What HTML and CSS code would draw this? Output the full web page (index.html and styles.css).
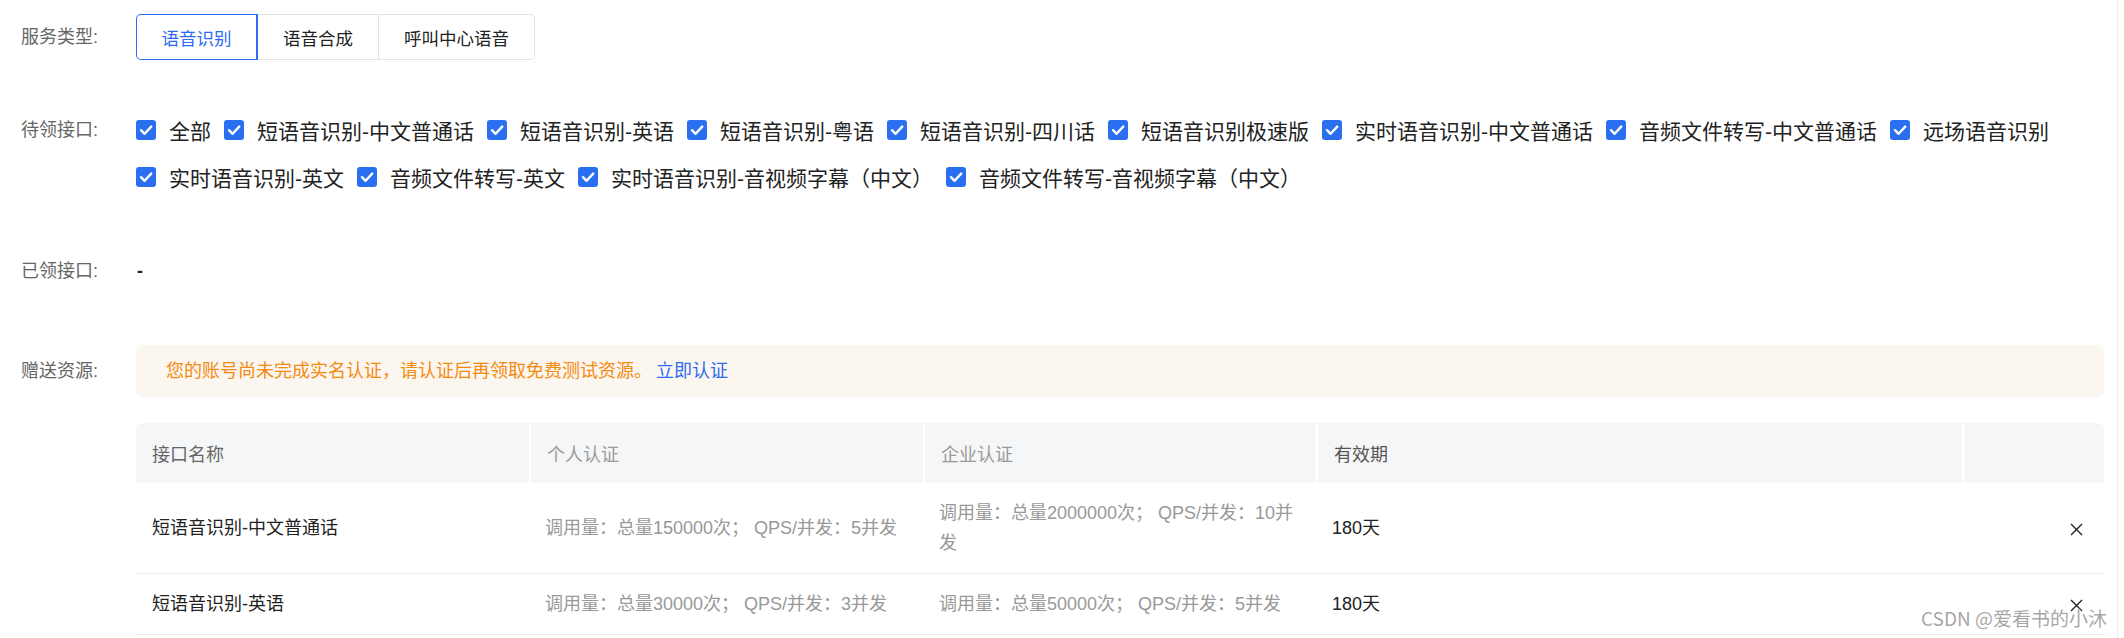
FILE: index.html
```html
<!DOCTYPE html>
<html lang="zh-CN">
<head>
<meta charset="UTF-8" />
<meta name="viewport" content="width=device-width, initial-scale=1" />
<title>免费资源领取</title>
<link rel="stylesheet" href="styles.css">
</head>
<body>

<div class="page">

  <div class="form-row row-service">
    <div class="form-label">服务类型:</div>
    <div class="form-ctrl">
      <div class="seg">
        <button class="seg-item active">语音识别</button>
        <button class="seg-item">语音合成</button>
        <button class="seg-item">呼叫中心语音</button>
      </div>
    </div>
  </div>

  <div class="form-row row-apis">
    <div class="form-label">待领接口:</div>
    <div class="form-ctrl">
      <div class="check-group">
        <label class="check"><span class="box"><svg viewBox="0 0 20 20"><path d="M5 10.2 L8.6 13.8 L15.2 6.6" /></svg></span>全部</label>
        <label class="check"><span class="box"><svg viewBox="0 0 20 20"><path d="M5 10.2 L8.6 13.8 L15.2 6.6" /></svg></span>短语音识别-中文普通话</label>
        <label class="check"><span class="box"><svg viewBox="0 0 20 20"><path d="M5 10.2 L8.6 13.8 L15.2 6.6" /></svg></span>短语音识别-英语</label>
        <label class="check"><span class="box"><svg viewBox="0 0 20 20"><path d="M5 10.2 L8.6 13.8 L15.2 6.6" /></svg></span>短语音识别-粤语</label>
        <label class="check"><span class="box"><svg viewBox="0 0 20 20"><path d="M5 10.2 L8.6 13.8 L15.2 6.6" /></svg></span>短语音识别-四川话</label>
        <label class="check"><span class="box"><svg viewBox="0 0 20 20"><path d="M5 10.2 L8.6 13.8 L15.2 6.6" /></svg></span>短语音识别极速版</label>
        <label class="check"><span class="box"><svg viewBox="0 0 20 20"><path d="M5 10.2 L8.6 13.8 L15.2 6.6" /></svg></span>实时语音识别-中文普通话</label>
        <label class="check"><span class="box"><svg viewBox="0 0 20 20"><path d="M5 10.2 L8.6 13.8 L15.2 6.6" /></svg></span>音频文件转写-中文普通话</label>
        <label class="check"><span class="box"><svg viewBox="0 0 20 20"><path d="M5 10.2 L8.6 13.8 L15.2 6.6" /></svg></span>远场语音识别</label>
        <label class="check"><span class="box"><svg viewBox="0 0 20 20"><path d="M5 10.2 L8.6 13.8 L15.2 6.6" /></svg></span>实时语音识别-英文</label>
        <label class="check"><span class="box"><svg viewBox="0 0 20 20"><path d="M5 10.2 L8.6 13.8 L15.2 6.6" /></svg></span>音频文件转写-英文</label>
        <label class="check"><span class="box"><svg viewBox="0 0 20 20"><path d="M5 10.2 L8.6 13.8 L15.2 6.6" /></svg></span>实时语音识别-音视频字幕（中文）</label>
        <label class="check"><span class="box"><svg viewBox="0 0 20 20"><path d="M5 10.2 L8.6 13.8 L15.2 6.6" /></svg></span>音频文件转写-音视频字幕（中文）</label>
      </div>
    </div>
  </div>

  <div class="form-row row-owned">
    <div class="form-label">已领接口:</div>
    <div class="form-ctrl"><span class="empty">-</span></div>
  </div>

  <div class="form-row row-gift">
    <div class="form-label">赠送资源:</div>
    <div class="form-ctrl">
      <div class="alert">
        您的账号尚未完成实名认证，请认证后再领取免费测试资源。<a href="#" class="alert-link">立即认证</a>
      </div>
    </div>
  </div>

  <div class="table-wrap">
    <table class="quota">
      <colgroup>
        <col class="c-name"><col class="c-personal"><col class="c-company"><col class="c-period"><col class="c-op">
      </colgroup>
      <thead>
        <tr>
          <th class="th-name">接口名称</th>
          <th class="th-muted">个人认证</th>
          <th class="th-muted">企业认证</th>
          <th class="th-period">有效期</th>
          <th></th>
        </tr>
      </thead>
      <tbody>
        <tr>
          <td>短语音识别-中文普通话</td>
          <td class="muted">调用量：总量150000次； QPS/并发：5并发</td>
          <td class="muted">调用量：总量2000000次； QPS/并发：10并发</td>
          <td>180天</td>
          <td class="op"><svg class="x" viewBox="0 0 13 13"><path d="M1 1 L12 12 M12 1 L1 12" /></svg></td>
        </tr>
        <tr>
          <td>短语音识别-英语</td>
          <td class="muted">调用量：总量30000次； QPS/并发：3并发</td>
          <td class="muted">调用量：总量50000次； QPS/并发：5并发</td>
          <td>180天</td>
          <td class="op"><svg class="x" viewBox="0 0 13 13"><path d="M1 1 L12 12 M12 1 L1 12" /></svg></td>
        </tr>
      </tbody>
    </table>
  </div>

  <div class="scroll-edge"></div>
  <div class="watermark">CSDN @爱看书的小沐</div>
</div>

</body>
</html>
```

FILE: styles.css
```css
body {
  margin: 0;
  font-family: "Liberation Sans", "Noto Sans CJK SC", sans-serif;
  color: #222;
  background: #fff;
}

.page {
  position: relative;
  width: 2124px;
  height: 638px;
  padding: 14px 20px 0 0;
  box-sizing: border-box;
  overflow: hidden;
}

/* form rows */
.form-row {
  display: flex;
  align-items: flex-start;
}

.form-label {
  width: 136px;
  flex: none;
  box-sizing: border-box;
  padding-left: 21px;
  font-size: 18px;
  color: #666;
}

.form-ctrl {
  flex: 1;
  font-size: 18px;
}

.row-service .form-label { line-height: 46px; }

.row-apis { margin-top: 55px; }
.row-apis .form-label { line-height: 30px; }

.row-owned { margin-top: 64px; }
.row-owned .form-label,
.row-owned .form-ctrl { line-height: 30px; }
.empty {
  font-weight: bold;
  padding-left: 1px;
}

.row-gift { margin-top: 59px; }
.row-gift .form-label { line-height: 53px; }

/* segmented buttons */
.seg {
  display: inline-flex;
  height: 46px;
}

.seg-item {
  font-family: inherit;
  font-size: 17.5px;
  color: #222;
  background: #fff;
  border: 1px solid #e3e3e3;
  border-left: none;
  padding: 0 25px;
  height: 46px;
  cursor: pointer;
}
.seg-item:first-child {
  border-left: 1px solid #e3e3e3;
  border-radius: 5px 0 0 5px;
}
.seg-item:last-child {
  border-radius: 0 5px 5px 0;
}
.seg-item.active {
  color: #2b6cf2;
  border: 1px solid #2b6cf2;
  border-right-width: 2px;
  width: 122px;
  padding: 0;
}

/* checkboxes */
.check-group {
  display: flex;
  flex-wrap: wrap;
  row-gap: 17px;
}

.check {
  display: flex;
  align-items: center;
  height: 30px;
  margin-right: 13px;
  font-size: 21px;
  color: #222;
  cursor: pointer;
}

.box {
  width: 20px;
  height: 20px;
  margin-right: 13px;
  border-radius: 3px;
  background: #2a6ff0;
  display: flex;
}
.box svg {
  width: 20px;
  height: 20px;
  fill: none;
  stroke: #fff;
  stroke-width: 2.4;
  stroke-linecap: round;
  stroke-linejoin: round;
}

/* alert */
.alert {
  height: 53px;
  line-height: 53px;
  padding: 0 30px;
  border-radius: 8px;
  background: #fbf6ef;
  color: #f38b12;
  font-size: 18px;
}
.alert-link {
  color: #2b6cf2;
  text-decoration: none;
  margin-left: 4px;
}

/* table */
.table-wrap {
  margin: 25px 0 0 136px;
}

.quota {
  width: 1968px;
  table-layout: fixed;
  border-collapse: separate;
  border-spacing: 0;
  font-size: 18px;
}

.c-name { width: 393px; }
.c-personal { width: 394px; }
.c-company { width: 393px; }
.c-period { width: 646px; }
.c-op { width: 142px; }

.quota th {
  height: 60px;
  padding: 0 16px;
  background: #f5f6f8;
  text-align: left;
  font-weight: normal;
  border-left: 2px solid #fff;
}
.quota th:first-child {
  border-left: none;
  border-top-left-radius: 6px;
}
.quota th:last-child {
  border-top-right-radius: 6px;
}
.th-name { color: #666; }
.th-muted { color: #9a9a9a; }
.th-period { color: #555; }

.quota td {
  padding: 15px 16px;
  line-height: 30px;
  border-bottom: 1px solid #ececec;
  vertical-align: middle;
  color: #222;
}
.quota td.muted { color: #999; }
.quota td.op {
  text-align: right;
  padding-right: 21px;
}

.x {
  width: 13px;
  height: 13px;
  vertical-align: middle;
  fill: none;
  stroke: #222;
  stroke-width: 1.4;
}

/* overlays */
.scroll-edge {
  position: absolute;
  top: 0;
  right: 6px;
  width: 1px;
  height: 100%;
  background: #ececec;
}

.watermark {
  position: absolute;
  right: 17px;
  bottom: 7px;
  font-family: "Noto Sans CJK SC", sans-serif;
  font-size: 19px;
  color: rgba(150, 150, 150, 0.85);
  text-shadow: 0 0 2px #fff, 0 0 2px #fff;
}
```
